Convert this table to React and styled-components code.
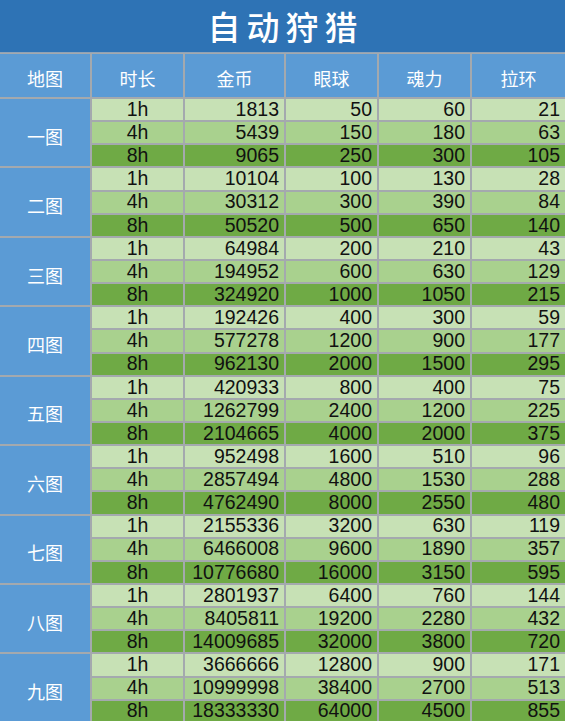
import React from 'react';
import styled, { createGlobalStyle } from 'styled-components';

const GlobalStyle = createGlobalStyle`
  html, body {
    margin: 0;
    padding: 0;
    background: #a4a9ae;
  }
  body {
    font-family: "Liberation Sans", "Noto Sans CJK SC", sans-serif;
  }
`;

const Page = styled.div`
  width: 565px;
  height: 721px;
  overflow: hidden;
  background: #a4a9ae;
`;

const TitleBar = styled.div`
  height: 52px;
  background: #2e73b5;
  color: #fff;
  display: flex;
  align-items: center;
  justify-content: center;
  font-family: "Noto Sans CJK SC", sans-serif;
  font-size: 33px;
  font-weight: 500;
  letter-spacing: 6px;
  padding-left: 6px;
  border-bottom: 1px solid #8fa3b8;
`;

const Grid = styled.div`
  display: grid;
  grid-template-columns: 90px 91px 99px 91px 91px 1fr;
  grid-template-rows: 43px;
  grid-auto-rows: 21.15px;
  gap: 2px;
  background: #a4a9ae;
  padding-top: 1px;
`;

const HeadCell = styled.div`
  background: #5b9bd5;
  color: #fff;
  display: flex;
  align-items: center;
  justify-content: center;
  padding-top: 4px;
  font-family: "Noto Sans CJK SC", sans-serif;
  font-size: 18px;
`;

const MapCell = styled.div`
  grid-row: span 3;
  background: #5b9bd5;
  color: #fff;
  display: flex;
  align-items: center;
  justify-content: center;
  padding-top: 6px;
  font-family: "Noto Sans CJK SC", sans-serif;
  font-size: 18px;
`;

const shades = ['#c7e1b5', '#a9d18e', '#6faa45'];

const Cell = styled.div`
  background: ${p => shades[p.$shade]};
  color: #111;
  display: flex;
  align-items: center;
  justify-content: ${p => (p.$center ? 'center' : 'flex-end')};
  padding-right: ${p => (p.$center ? '0' : '5px')};
  font-size: 19.5px;
  line-height: 1;
`;

const headers = ['地图', '时长', '金币', '眼球', '魂力', '拉环'];

const groups = [
  ['一图', [[1813, 50, 60, 21], [5439, 150, 180, 63], [9065, 250, 300, 105]]],
  ['二图', [[10104, 100, 130, 28], [30312, 300, 390, 84], [50520, 500, 650, 140]]],
  ['三图', [[64984, 200, 210, 43], [194952, 600, 630, 129], [324920, 1000, 1050, 215]]],
  ['四图', [[192426, 400, 300, 59], [577278, 1200, 900, 177], [962130, 2000, 1500, 295]]],
  ['五图', [[420933, 800, 400, 75], [1262799, 2400, 1200, 225], [2104665, 4000, 2000, 375]]],
  ['六图', [[952498, 1600, 510, 96], [2857494, 4800, 1530, 288], [4762490, 8000, 2550, 480]]],
  ['七图', [[2155336, 3200, 630, 119], [6466008, 9600, 1890, 357], [10776680, 16000, 3150, 595]]],
  ['八图', [[2801937, 6400, 760, 144], [8405811, 19200, 2280, 432], [14009685, 32000, 3800, 720]]],
  ['九图', [[3666666, 12800, 900, 171], [10999998, 38400, 2700, 513], [18333330, 64000, 4500, 855]]],
];

const hours = ['1h', '4h', '8h'];

export default function App() {
  return (
    <Page>
      <GlobalStyle />
      <TitleBar>自动狩猎</TitleBar>
      <Grid>
        {headers.map(h => (
          <HeadCell key={h}>{h}</HeadCell>
        ))}
        {groups.map(([name, rows]) => (
          <React.Fragment key={name}>
            {rows.map((vals, i) => (
              <React.Fragment key={i}>
                {i === 0 && <MapCell>{name}</MapCell>}
                <Cell $shade={i} $center>{hours[i]}</Cell>
                {vals.map((v, j) => (
                  <Cell key={j} $shade={i}>{v}</Cell>
                ))}
              </React.Fragment>
            ))}
          </React.Fragment>
        ))}
      </Grid>
    </Page>
  );
}
